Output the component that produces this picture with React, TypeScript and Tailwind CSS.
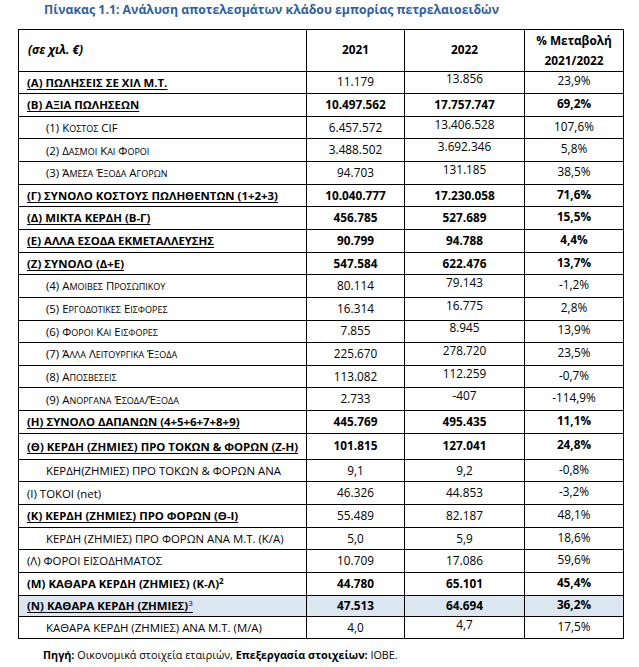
import React from "react";

type Row = {
  label: string;
  sup?: string;
  v1: string;
  v2: string;
  pct: string;
  bold?: boolean; // bold label
  line?: boolean; // underlined label
  vals?: boolean; // bold numbers
  indent?: boolean;
  caps?: boolean;
  lift?: boolean; // 2022 value sits a bit higher
  h?: string;
  bg?: string;
};

const rows: Row[] = [
  { label: "(Α) ΠΩΛΗΣΕΙΣ ΣΕ ΧΙΛ Μ.Τ.", v1: "11.179", v2: "13.856", pct: "23,9%", bold: true, line: true, lift: true },
  { label: "(Β) ΑΞΙΑ ΠΩΛΗΣΕΩΝ", v1: "10.497.562", v2: "17.757.747", pct: "69,2%", bold: true, line: true, vals: true },
  { label: "(1) Κοστος CIF", v1: "6.457.572", v2: "13.406.528", pct: "107,6%", indent: true, caps: true, lift: true },
  { label: "(2) Δασμοι Και Φοροι", v1: "3.488.502", v2: "3.692.346", pct: "5,8%", indent: true, caps: true, lift: true },
  { label: "(3) Άμεσα Έξοδα Αγορων", v1: "94.703", v2: "131.185", pct: "38,5%", indent: true, caps: true, lift: true },
  { label: "(Γ) ΣΥΝΟΛΟ ΚΟΣΤΟΥΣ ΠΩΛΗΘΕΝΤΩΝ (1+2+3)", v1: "10.040.777", v2: "17.230.058", pct: "71,6%", bold: true, line: true, vals: true },
  { label: "(Δ) ΜΙΚΤΑ ΚΕΡΔΗ (Β-Γ)", v1: "456.785", v2: "527.689", pct: "15,5%", bold: true, line: true, vals: true },
  { label: "(Ε) ΑΛΛΑ ΕΣΟΔΑ ΕΚΜΕΤΑΛΛΕΥΣΗΣ", v1: "90.799", v2: "94.788", pct: "4,4%", bold: true, line: true, vals: true },
  { label: "(Ζ) ΣΥΝΟΛΟ (Δ+Ε)", v1: "547.584", v2: "622.476", pct: "13,7%", bold: true, line: true, vals: true },
  { label: "(4) Αμοιβες Προσωπικου", v1: "80.114", v2: "79.143", pct: "-1,2%", indent: true, caps: true, lift: true },
  { label: "(5) Εργοδοτικες Εισφορες", v1: "16.314", v2: "16.775", pct: "2,8%", indent: true, caps: true, lift: true },
  { label: "(6) Φοροι Και Εισφορες", v1: "7.855", v2: "8.945", pct: "13,9%", indent: true, caps: true, lift: true },
  { label: "(7) Άλλα Λειτουργικα Έξοδα", v1: "225.670", v2: "278.720", pct: "23,5%", indent: true, caps: true, lift: true },
  { label: "(8) Αποσβεσεις", v1: "113.082", v2: "112.259", pct: "-0,7%", indent: true, caps: true, lift: true },
  { label: "(9) Ανοργανα Έσοδα/Έξοδα", v1: "2.733", v2: "-407", pct: "-114,9%", indent: true, caps: true, lift: true },
  { label: "(Η) ΣΥΝΟΛΟ ΔΑΠΑΝΩΝ (4+5+6+7+8+9)", v1: "445.769", v2: "495.435", pct: "11,1%", bold: true, line: true, vals: true },
  { label: "(Θ) ΚΕΡΔΗ (ΖΗΜΙΕΣ) ΠΡΟ ΤΟΚΩΝ & ΦΟΡΩΝ (Ζ-Η)", v1: "101.815", v2: "127.041", pct: "24,8%", bold: true, line: true, vals: true, h: "h-[26px]" },
  { label: "ΚΕΡΔΗ(ΖΗΜΙΕΣ) ΠΡΟ ΤΟΚΩΝ & ΦΟΡΩΝ ΑΝΑ", v1: "9,1", v2: "9,2", pct: "-0,8%", indent: true },
  { label: "(Ι) ΤΟΚΟΙ (net)", v1: "46.326", v2: "44.853", pct: "-3,2%" },
  { label: "(Κ) ΚΕΡΔΗ (ΖΗΜΙΕΣ) ΠΡΟ ΦΟΡΩΝ (Θ-Ι)", v1: "55.489", v2: "82.187", pct: "48,1%", bold: true, line: true },
  { label: "ΚΕΡΔΗ (ΖΗΜΙΕΣ) ΠΡΟ ΦΟΡΩΝ ΑΝΑ Μ.Τ. (Κ/Α)", v1: "5,0", v2: "5,9", pct: "18,6%", indent: true },
  { label: "(Λ) ΦΟΡΟΙ ΕΙΣΟΔΗΜΑΤΟΣ", v1: "10.709", v2: "17.086", pct: "59,6%" },
  { label: "(Μ) ΚΑΘΑΡΑ ΚΕΡΔΗ (ΖΗΜΙΕΣ) (Κ-Λ)", sup: "2", v1: "44.780", v2: "65.101", pct: "45,4%", bold: true, vals: true },
  { label: "(Ν) ΚΑΘΑΡΑ ΚΕΡΔΗ (ΖΗΜΙΕΣ)", sup: "3", v1: "47.513", v2: "64.694", pct: "36,2%", bold: true, line: true, vals: true, h: "h-[21px]", bg: "bg-[#dce6f1]" },
  { label: "ΚΑΘΑΡΑ ΚΕΡΔΗ (ΖΗΜΙΕΣ) ΑΝΑ Μ.Τ. (Μ/Α)", v1: "4,0", v2: "4,7", pct: "17,5%", indent: true, lift: true },
];

// Word-style small caps: lowercase runs drawn as smaller capitals
function SmallCaps({ text }: { text: string }) {
  const parts: { small: boolean; s: string }[] = [];
  for (const ch of text) {
    const small = ch !== ch.toUpperCase();
    const last = parts[parts.length - 1];
    if (last && last.small === small) last.s += ch;
    else parts.push({ small, s: ch });
  }
  return (
    <>
      {parts.map((p, i) =>
        p.small ? (
          <span key={i} className="text-[9px]">{p.s.toUpperCase()}</span>
        ) : (
          <span key={i}>{p.s}</span>
        )
      )}
    </>
  );
}

export default function App() {
  return (
    <div className="w-[639px] h-[667px] bg-white text-black font-['Open_Sans',sans-serif]">
      <h1 className="pl-[44px] pt-[2px] h-[29px] text-[12.3px] font-bold text-[#30619f] leading-[16px]">
        Πίνακας 1.1: Ανάλυση αποτελεσμάτων κλάδου εμπορίας πετρελαιοειδών
      </h1>
      <table className="ml-[18px] w-[605px] table-fixed border-collapse border border-black text-[11.8px]">
        <colgroup>
          <col className="w-[288px]" />
          <col className="w-[98px]" />
          <col className="w-[120px]" />
          <col className="w-[99px]" />
        </colgroup>
        <thead>
          <tr className="h-[41.5px] font-bold">
            <th className="border border-black pl-[9px] text-left italic">(σε χιλ. €)</th>
            <th className="border border-black text-center">2021</th>
            <th className="border border-black text-center">2022</th>
            <th className="border border-black text-center leading-[20px]">
              % Μεταβολή
              <br />
              2021/2022
            </th>
          </tr>
        </thead>
        <tbody>
          {rows.map((row, index) => (
            <tr key={index} className={`${row.h ?? "h-[22.65px]"} ${row.bg ?? ""}`}>
              <td className={`border border-black whitespace-nowrap leading-none text-[11.4px] ${row.indent ? "pl-[27px]" : "pl-[8px]"} ${row.bold ? "font-bold" : ""}`}>
                <span className={row.line ? "underline underline-offset-2" : ""}>
                  {row.caps ? <SmallCaps text={row.label} /> : row.label}
                  {row.sup && <sup className={`text-[8px] ${row.sup === "3" ? "font-normal" : ""}`}>{row.sup}</sup>}
                </span>
              </td>
              <td className={`border border-black text-center leading-none ${row.vals ? "font-bold" : ""}`}>{row.v1}</td>
              <td className={`border border-black text-center leading-none ${row.vals ? "font-bold" : ""}`}>
                <span className={`inline-block ${row.lift ? "-translate-y-[3px]" : ""}`}>{row.v2}</span>
              </td>
              <td className={`border border-black text-center leading-none ${row.vals ? "font-bold" : ""}`}>
                <span className="inline-block -translate-y-[1.5px]">{row.pct}</span>
              </td>
            </tr>
          ))}
        </tbody>
      </table>
      <p className="pl-[43px] pt-[9px] text-[10.8px] leading-[14px]">
        <span className="font-bold">Πηγή:</span> Οικονομικά στοιχεία εταιριών, <span className="font-bold">Επεξεργασία στοιχείων:</span> ΙΟΒΕ.
      </p>
    </div>
  );
}
